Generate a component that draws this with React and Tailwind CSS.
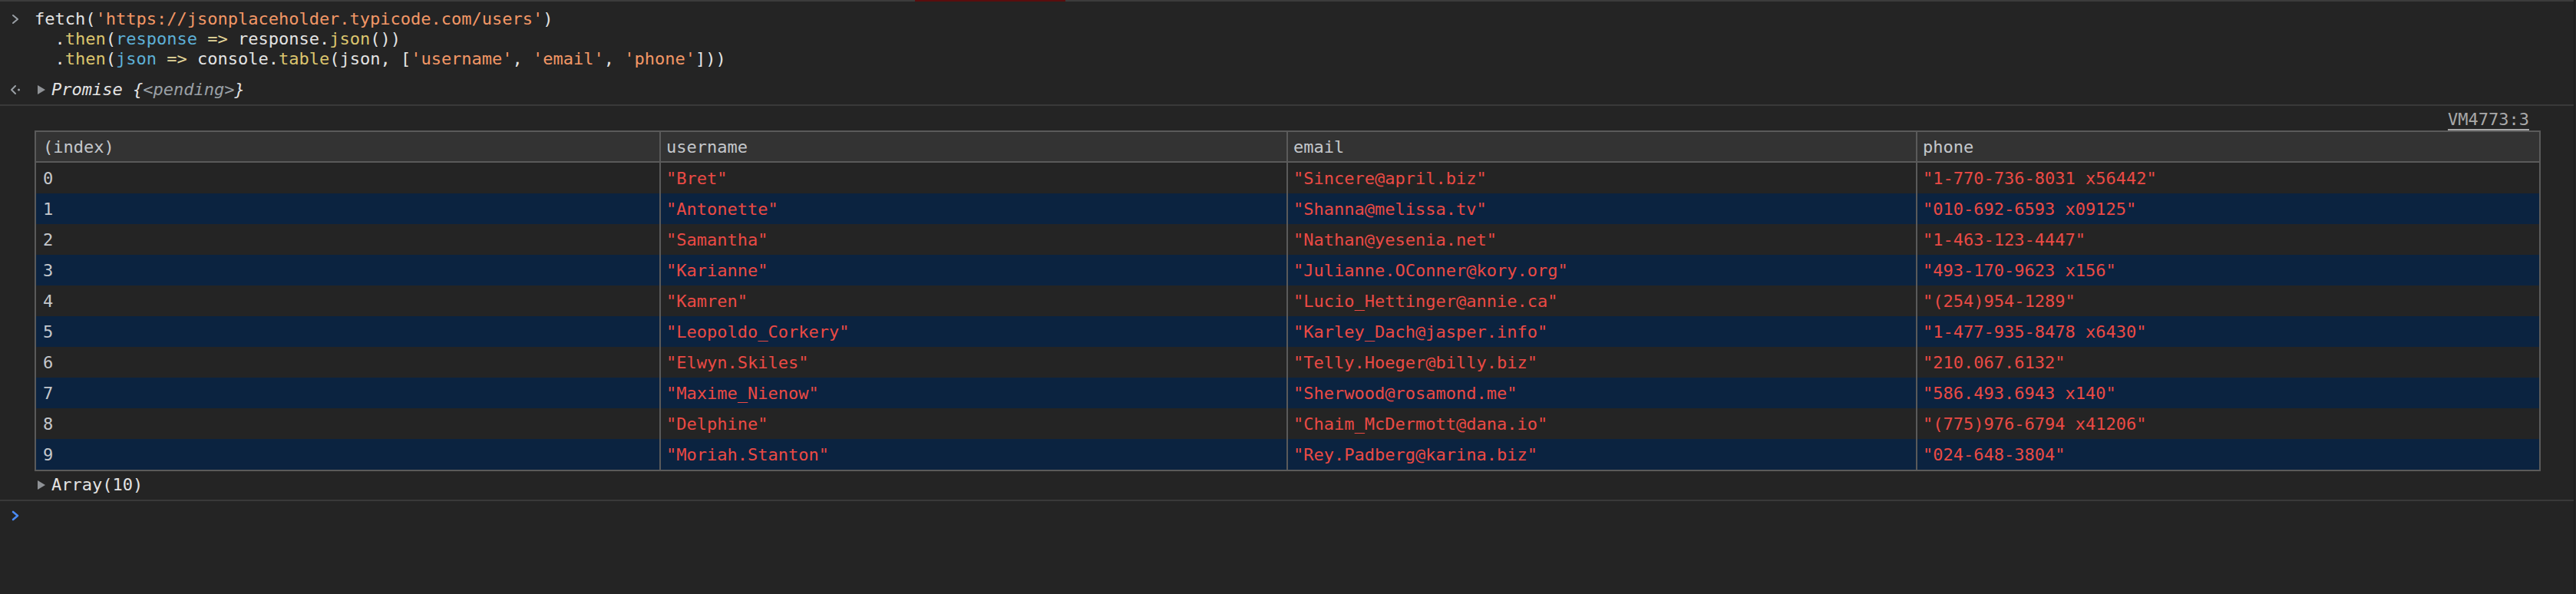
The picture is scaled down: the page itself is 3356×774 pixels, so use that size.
import React from "react";

const users = [
  ["Bret", "Sincere@april.biz", "1-770-736-8031 x56442"],
  ["Antonette", "Shanna@melissa.tv", "010-692-6593 x09125"],
  ["Samantha", "Nathan@yesenia.net", "1-463-123-4447"],
  ["Karianne", "Julianne.OConner@kory.org", "493-170-9623 x156"],
  ["Kamren", "Lucio_Hettinger@annie.ca", "(254)954-1289"],
  ["Leopoldo_Corkery", "Karley_Dach@jasper.info", "1-477-935-8478 x6430"],
  ["Elwyn.Skiles", "Telly.Hoeger@billy.biz", "210.067.6132"],
  ["Maxime_Nienow", "Sherwood@rosamond.me", "586.493.6943 x140"],
  ["Delphine", "Chaim_McDermott@dana.io", "(775)976-6794 x41206"],
  ["Moriah.Stanton", "Rey.Padberg@karina.biz", "024-648-3804"],
];

const Str = ({ children }) => <span className="text-[#f29766]">{children}</span>;
const Fn = ({ children }) => <span className="text-[#dcc66e]">{children}</span>;
const Arg = ({ children }) => <span className="text-[#5db0d7]">{children}</span>;
const Op = ({ children }) => <span className="text-[#e4d79a]">{children}</span>;

function Chevron({ color = "#9aa0a6", width = 2 }) {
  return (
    <svg width="12" height="16" viewBox="0 0 12 16" fill="none">
      <path d="M3 3l6 5-6 5" stroke={color} strokeWidth={width} strokeLinecap="round" strokeLinejoin="round" />
    </svg>
  );
}

function Triangle() {
  return (
    <svg width="12" height="14" viewBox="0 0 12 14">
      <path d="M1 1l10 6-10 6z" fill="#8f9296" />
    </svg>
  );
}

function Separator() {
  return <div className="h-[2px] bg-[#393939]" />;
}

function App() {
  return (
    <div className="w-[3356px] h-[774px] bg-[#242424] text-[#e3e3e3] font-['DejaVu_Sans_Mono',monospace] text-[22px] overflow-hidden flex">
      <div className="flex-1 flex flex-col">
        {/* top edge of the previous message */}
        <div className="h-[2px] flex">
          <div className="w-[1192px] bg-[#3c3c3c]" />
          <div className="w-[196px] bg-[#5a0d0d]" />
          <div className="flex-1 bg-[#3c3c3c]" />
        </div>

        {/* input */}
        <div className="pt-[10px] flex">
          <div className="w-[45px] h-[26px] flex items-center pl-[14px]">
            <Chevron />
          </div>
          <div className="leading-[26px] whitespace-pre">
            <div>fetch(<Str>'https://jsonplaceholder.typicode.com/users'</Str>)</div>
            <div>  .<Fn>then</Fn>(<Arg>response</Arg> <Op>=&gt;</Op> response.<Fn>json</Fn>())</div>
            <div>
              {"  ."}<Fn>then</Fn>(<Arg>json</Arg> <Op>=&gt;</Op> console.<Fn>table</Fn>(json, [<Str>'username'</Str>, <Str>'email'</Str>, <Str>'phone'</Str>]))
            </div>
          </div>
        </div>

        {/* result */}
        <div className="mt-[14px] mb-[6px] h-[26px] flex items-center">
          <div className="w-[45px] flex items-center pl-[12px] gap-[3px]">
            <svg width="16" height="16" viewBox="0 0 16 16" fill="none">
              <path d="M8 3L3 8l5 5" stroke="#9aa0a6" strokeWidth="2" strokeLinecap="round" strokeLinejoin="round" />
              <circle cx="12.5" cy="8" r="1.5" fill="#9aa0a6" />
            </svg>
          </div>
          <div className="w-[22px] flex items-center pl-[3px]">
            <Triangle />
          </div>
          <span className="italic leading-[26px]">
            Promise {"{"}<span className="text-[#9aa0a6]">&lt;pending&gt;</span>{"}"}
          </span>
        </div>

        <Separator />

        {/* console.table output */}
        <div className="pl-[45px] pr-[43px]">
          <div className="pt-[5px] h-[31px] flex justify-end pr-[15px]">
            <span className="leading-[26px] text-[#a8a8a8] underline underline-offset-[5px] decoration-2">VM4773:3</span>
          </div>
          <div className="mt-[1px] border-2 border-[#5a5a5a]">
            <div className="grid grid-cols-[812px_817px_820px_1fr] h-[40px] bg-[#333333] border-b-2 border-[#5a5a5a] text-[#c4c7cb]">
              <div className="pl-[9px] flex items-center">(index)</div>
              <div className="pl-[7px] flex items-center border-l-2 border-[#5a5a5a]">username</div>
              <div className="pl-[7px] flex items-center border-l-2 border-[#5a5a5a]">email</div>
              <div className="pl-[7px] flex items-center border-l-2 border-[#5a5a5a]">phone</div>
            </div>
            {users.map((u, i) => (
              <div
                key={i}
                className={`grid grid-cols-[812px_817px_820px_1fr] h-[40px] ${i % 2 ? "bg-[#0b2340]" : "bg-[#242424]"}`}
              >
                <div className="pl-[9px] flex items-center text-[#c4c7cb]">{i}</div>
                {u.map((v, j) => (
                  <div key={j} className="pl-[7px] flex items-center border-l-2 border-[#5a5a5a] text-[#ea4a44] whitespace-pre">
                    "{v}"
                  </div>
                ))}
              </div>
            ))}
          </div>
          <div className="mt-[5px] mb-[6px] h-[26px] flex items-center">
            <div className="w-[22px] flex items-center pl-[3px]">
              <Triangle />
            </div>
            <span className="leading-[26px]">Array(10)</span>
          </div>
        </div>

        <Separator />

        {/* prompt */}
        <div className="pt-[6px] h-[32px] flex items-center pl-[14px]">
          <Chevron color="#4a8af4" width={2.6} />
        </div>
      </div>
      <div className="w-[3px] border-l border-[#1b1b1b] bg-[#242424]" />
    </div>
  );
}

export default App;
